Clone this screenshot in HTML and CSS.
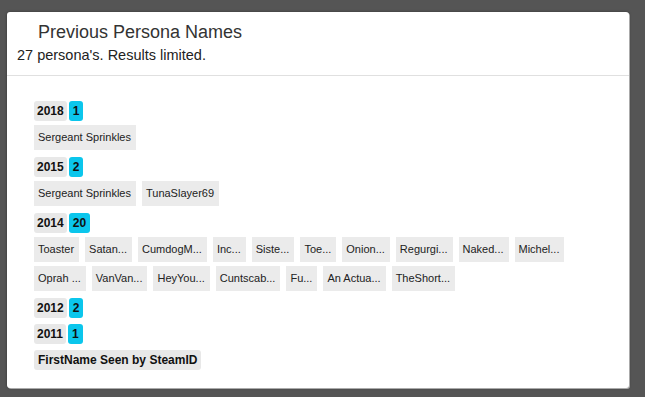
FILE: index.html
```html
<!DOCTYPE html>
<html lang="en">
<head>
    <meta charset="UTF-8">
    <meta name="viewport" content="width=device-width, initial-scale=1.0">
    <title>Previous Persona Names</title>
    <link rel="stylesheet" href="styles.css">
</head>
<body>
    <div class="modal">
        <div class="modal-header">
            <h4 class="modal-title">Previous Persona Names</h4>
            <div class="modal-sub">27 persona's. Results limited.</div>
        </div>
        <div class="modal-body">
            <div class="year-group">
                <div class="year-line"><span class="year">2018</span><span class="count">1</span></div>
                <div class="names">
                    <span class="name">Sergeant Sprinkles</span>
                </div>
            </div>
            <div class="year-group">
                <div class="year-line"><span class="year">2015</span><span class="count">2</span></div>
                <div class="names">
                    <span class="name">Sergeant Sprinkles</span>
                    <span class="name">TunaSlayer69</span>
                </div>
            </div>
            <div class="year-group">
                <div class="year-line"><span class="year">2014</span><span class="count">20</span></div>
                <div class="names">
                    <span class="name">Toaster</span>
                    <span class="name">Satan...</span>
                    <span class="name">CumdogM...</span>
                    <span class="name">Inc...</span>
                    <span class="name">Siste...</span>
                    <span class="name">Toe...</span>
                    <span class="name">Onion...</span>
                    <span class="name">Regurgi...</span>
                    <span class="name">Naked...</span>
                    <span class="name">Michel...</span>
                    <span class="name">Oprah ...</span>
                    <span class="name">VanVan...</span>
                    <span class="name">HeyYou...</span>
                    <span class="name">Cuntscab...</span>
                    <span class="name">Fu...</span>
                    <span class="name">An Actua...</span>
                    <span class="name">TheShort...</span>
                </div>
            </div>
            <div class="year-group">
                <div class="year-line"><span class="year">2012</span><span class="count">2</span></div>
            </div>
            <div class="year-group">
                <div class="year-line"><span class="year">2011</span><span class="count">1</span></div>
            </div>
            <div class="year-group">
                <div class="year-line"><span class="year first-seen">FirstName Seen by SteamID</span></div>
            </div>
        </div>
    </div>
</body>
</html>
```

FILE: styles.css
```css
/* General Styling */
body {
    font-family: 'Liberation Sans', Arial, sans-serif;
    background: #555;
    color: #222;
    margin: 0;
    padding: 12px 15px 8px 7px;
}

.modal {
    background: #fff;
    border-radius: 3px;
    box-shadow: 1px 1px 0 #aaa, 0 0 3px rgba(0, 0, 0, 0.4);
    width: 622px;
}

.modal-header {
    padding: 10px 10px;
    border-bottom: 1px solid #e0e0e0;
}

.modal-title {
    margin: 0 0 3px 21px;
    font-size: 18px;
    font-weight: normal;
    line-height: 20px;
    color: #333;
}

.modal-sub {
    font-size: 14.5px;
    line-height: 20px;
    color: #222;
}

.modal-body {
    padding: 25px 27px 18px;
    display: flex;
    flex-direction: column;
    gap: 6px;
}

.year-group {
    display: flex;
    flex-direction: column;
    gap: 4px;
}

.year-line {
    display: flex;
    gap: 2px;
}

.year, .count {
    font-size: 12px;
    font-weight: bold;
    line-height: 20px;
    border-radius: 3px;
    color: #111;
}

.year {
    background: #e8e8e8;
    padding: 0 3px;
}

.count {
    background: #0bc6ec;
    padding: 0 4px;
}

.first-seen {
    padding: 0 4px;
}

.names {
    display: flex;
    flex-wrap: wrap;
    gap: 4px 6px;
    margin-bottom: 1px;
}

.name {
    background: #ebebeb;
    font-size: 11px;
    line-height: 13px;
    padding: 6px 5px 6px 4px;
    color: #222;
}
```
